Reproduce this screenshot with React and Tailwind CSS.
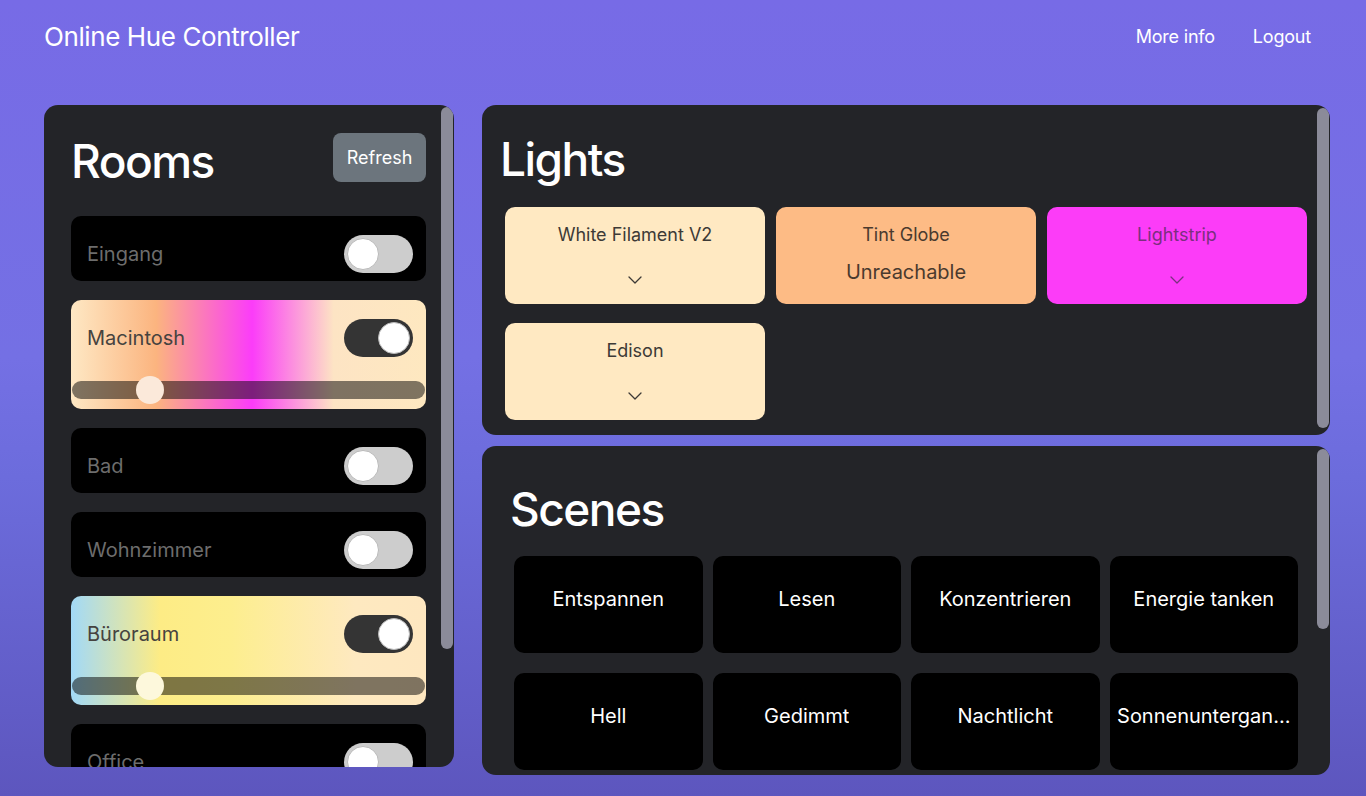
import clsx from "clsx";

const rooms = [
  { name: "Eingang", on: false },
  {
    name: "Macintosh",
    on: true,
    bg: "bg-[linear-gradient(90deg,#fee8c4_0%,#fbb47f_24%,#fb3cf9_51%,#fde4c4_74%,#fee8c0_100%)]",
    thumb: "bg-[#fbe9da]",
  },
  { name: "Bad", on: false },
  { name: "Wohnzimmer", on: false },
  {
    name: "Büroraum",
    on: true,
    bg: "bg-[linear-gradient(90deg,#a2d9f7_0%,#fdec85_25%,#fdee8e_45%,#fee9c0_80%,#fee7c0_100%)]",
    thumb: "bg-[#fdf8dc]",
  },
  { name: "Office", on: false },
  { name: "Schlafzimmer", on: false },
];

const lights = [
  { name: "White Filament V2", bg: "bg-[#ffe9c2]", text: "text-[#3d3a36]" },
  { name: "Tint Globe", bg: "bg-[#fdbb85]", text: "text-[#4a3a2e]", unreachable: true },
  { name: "Lightstrip", bg: "bg-[#fc3cf8]", text: "text-[#7b2f7f]" },
  { name: "Edison", bg: "bg-[#ffe9c2]", text: "text-[#3d3a36]" },
];

const scenes = [
  "Entspannen",
  "Lesen",
  "Konzentrieren",
  "Energie tanken",
  "Hell",
  "Gedimmt",
  "Nachtlicht",
  "Sonnenuntergan...",
  "Tropendämmerung",
  "Nordlichter",
  "Frühlingsblüten",
  "Arktische Aurora",
];

const Toggle = ({ on }) => (
  <span
    className={clsx(
      "flex h-[38px] w-[69px] shrink-0 items-center rounded-full p-[3px]",
      on ? "justify-end bg-[#343434]" : "justify-start bg-[#cdcdcd]",
    )}
  >
    <span className="h-[32px] w-[32px] rounded-full border border-[#b9b9b9] bg-white" />
  </span>
);

const Chevron = () => (
  <svg width="14" height="8" viewBox="0 0 14 8" fill="none">
    <polyline
      points="1,1 7,7 13,1"
      stroke="currentColor"
      strokeWidth="1.3"
      strokeLinecap="round"
      strokeLinejoin="round"
    />
  </svg>
);

// overlay scroll thumb, like the mac scrollbar in the screenshot
const Thumb = ({ className }) => (
  <span
    className={clsx(
      "absolute right-[1px] w-[12px] rounded-full bg-[#8b8b99]",
      className,
    )}
  />
);

const RoomCard = ({ room }) => (
  <div
    className={clsx(
      "flex shrink-0 flex-col rounded-[10px] pt-[19px]",
      room.on ? clsx("h-[109px]", room.bg) : "h-[65px] bg-black",
    )}
  >
    <div className="flex items-center justify-between pl-[16px] pr-[13px]">
      <span
        className={clsx(
          "text-[20px]",
          room.on ? "text-[#46433f]" : "text-[#6d6d6d]",
        )}
      >
        {room.name}
      </span>
      <Toggle on={room.on} />
    </div>
    {room.on && (
      <div className="relative mx-[1px] mt-[24px] h-[18px] rounded-full bg-black/50">
        <span
          className={clsx(
            "absolute left-[64px] top-[-5px] h-[28px] w-[28px] rounded-full",
            room.thumb,
          )}
        />
      </div>
    )}
  </div>
);

export default function App() {
  return (
    <div className="h-[796px] overflow-hidden bg-[linear-gradient(180deg,#776be6_0%,#7470e4_45%,#6c6cdc_60%,#5d56be_100%)] font-['Inter',sans-serif] text-white">
      <header className="flex h-[72px] items-center justify-between pl-[44px] pr-[55px]">
        <h1 className="text-[26px] tracking-[-0.4px]">Online Hue Controller</h1>
        <nav className="flex gap-[38px] text-[18px] tracking-[-0.2px]">
          <a>More info</a>
          <a>Logout</a>
        </nav>
      </header>

      <main className="flex gap-[28px] pl-[44px] pt-[33px]">
        <section className="relative h-[662px] w-[410px] shrink-0 overflow-hidden rounded-[14px] bg-[#232428]">
          <div className="pb-[28px] pl-[27px] pr-[28px] pt-[28px]">
            <div className="mb-[27px] flex items-start justify-between">
              <h2 className="pt-[1px] text-[46px] font-medium leading-[1.2] tracking-[-1.5px]">
                Rooms
              </h2>
              <button className="h-[49px] w-[93px] rounded-[8px] bg-[#6c757d] text-[18px] text-white">
                Refresh
              </button>
            </div>
            <div className="flex flex-col gap-[19px]">
              {rooms.map((room) => (
                <RoomCard key={room.name} room={room} />
              ))}
            </div>
          </div>
          <Thumb className="top-[2px] h-[542px]" />
        </section>

        <div className="flex w-[848px] shrink-0 flex-col gap-[11px]">
          <section className="relative h-[330px] overflow-hidden rounded-[14px] bg-[#232428]">
            <div className="pb-[16px] pl-[23px] pr-[23px] pt-[27px]">
              <h2 className="-ml-[5px] mb-[20px] text-[46px] font-medium leading-[1.2] tracking-[-1.5px]">
                Lights
              </h2>
              <div className="grid grid-cols-3 gap-x-[11px] gap-y-[19px]">
                {lights.map((light) => (
                  <div
                    key={light.name}
                    className={clsx(
                      "flex h-[97px] flex-col items-center rounded-[10px] pt-[17px]",
                      light.bg,
                      light.text,
                    )}
                  >
                    <span className="text-[18px] leading-[22px]">{light.name}</span>
                    {light.unreachable ? (
                      <span className="mt-[14px] text-[20px] leading-[24px]">Unreachable</span>
                    ) : (
                      <span className="mt-[30px] flex">
                        <Chevron />
                      </span>
                    )}
                  </div>
                ))}
              </div>
            </div>
            <Thumb className="top-[3px] h-[320px]" />
          </section>

          <section className="relative h-[329px] overflow-hidden rounded-[14px] bg-[#232428]">
            <div className="pb-[36px] pl-[32px] pr-[32px] pt-[36px]">
              <h2 className="-ml-[4px] mb-[19px] text-[46px] font-medium leading-[1.2] tracking-[-1.5px]">
                Scenes
              </h2>
              <div className="grid grid-cols-4 gap-x-[10px] gap-y-[20px]">
                {scenes.map((scene) => (
                  <button
                    key={scene}
                    className="flex h-[97px] min-w-0 items-center justify-center rounded-[10px] bg-black pb-[11px] text-[20px] text-white"
                  >
                    <span className="truncate">{scene}</span>
                  </button>
                ))}
              </div>
            </div>
            <Thumb className="top-[3px] h-[180px]" />
          </section>
        </div>
      </main>
    </div>
  );
}
